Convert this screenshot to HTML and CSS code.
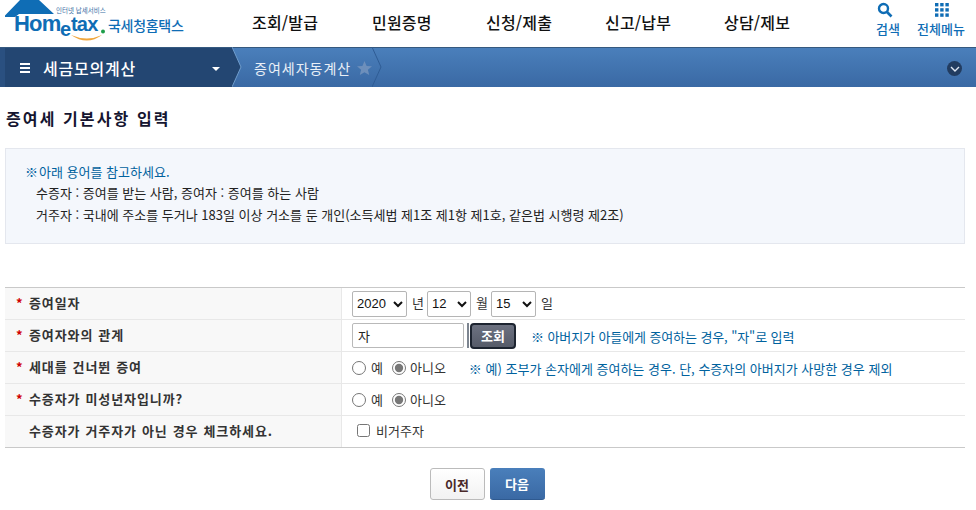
FILE: index.html
```html
<!DOCTYPE html>
<html lang="ko">
<head>
<meta charset="utf-8">
<title>증여세 기본사항 입력</title>
<link rel="stylesheet" href="styles.css">
</head>
<body>
<header class="top">
  <a class="logo">
    <svg class="logo-svg" width="188" height="47" viewBox="0 0 188 47">
      <path d="M5 15.5 L20 0 H39 L54 14 H19 L15 17 H5 Z" fill="#0f6db5"/>
      <text x="56" y="13" class="logo-small">인터넷 납세서비스</text>
      <text x="14" y="31" class="logo-home">Hom</text>
      <text x="60" y="36" class="logo-e">e</text>
      <text x="71" y="31" class="logo-tax">tax</text>
      <circle cx="103" cy="31.5" r="2" fill="#1e9e4a"/>
      <path d="M71 35 Q87 46 102 35 Q87 42 71 35 Z" fill="#f0a63c"/>
      <text x="108" y="31" class="logo-kr">국세청홈택스</text>
    </svg>
  </a>
  <nav class="gnb">
    <a>조회/발급</a><a>민원증명</a><a>신청/제출</a><a>신고/납부</a><a>상담/제보</a>
  </nav>
  <div class="tools">
    <a class="tool tool-search">
      <svg width="16" height="16" viewBox="0 0 16 16"><circle cx="6.5" cy="6.5" r="4.5" fill="none" stroke="#0f6db5" stroke-width="2.4"/><path d="M10 10 L14.5 14.5" stroke="#0f6db5" stroke-width="2.6"/></svg>
      <span>검색</span>
    </a>
    <a class="tool tool-all">
      <svg width="14" height="14" viewBox="0 0 14 14" fill="#0f6db5"><rect x="0" y="0" width="3.4" height="3.4"/><rect x="5.2" y="0" width="3.4" height="3.4"/><rect x="10.4" y="0" width="3.4" height="3.4"/><rect x="0" y="5.2" width="3.4" height="3.4"/><rect x="5.2" y="5.2" width="3.4" height="3.4"/><rect x="10.4" y="5.2" width="3.4" height="3.4"/><rect x="0" y="10.4" width="3.4" height="3.4"/><rect x="5.2" y="10.4" width="3.4" height="3.4"/><rect x="10.4" y="10.4" width="3.4" height="3.4"/></svg>
      <span>전체메뉴</span>
    </a>
  </div>
</header>

<div class="crumb">
  <div class="crumb-main">
    <span class="burger"><i></i><i></i><i></i></span>
    <strong>세금모의계산</strong>
    <span class="caret"></span>
    <svg class="chev" width="11" height="40" viewBox="0 0 11 40"><path d="M0 0 L9 20 L0 40 Z" fill="#234672"/><path d="M0 0 L9 20 L0 40" fill="none" stroke="#6f9ccc" stroke-width="1"/></svg>
  </div>
  <div class="crumb-sub">
    <span>증여세자동계산</span>
    <svg class="star" width="15" height="14" viewBox="0 0 15 14"><path d="M7.5 0 L9.6 4.9 L15 5.3 L10.9 8.8 L12.2 14 L7.5 11.2 L2.8 14 L4.1 8.8 L0 5.3 L5.4 4.9 Z" fill="#6d8fbb"/></svg>
    <svg class="chev2" width="10" height="40" viewBox="0 0 10 40"><path d="M0 0 L9 20 L0 40" fill="none" stroke="#2f5c94" stroke-width="1"/></svg>
  </div>
  <span class="more"><svg width="10" height="6" viewBox="0 0 10 6"><path d="M1 1 L5 5 L9 1" fill="none" stroke="#dfe7f2" stroke-width="1.4"/></svg></span>
</div>

<main class="content">
  <h2 class="title">증여세 기본사항 입력</h2>

  <section class="notice">
    <p class="notice-head"><span class="mark">※</span>아래 용어를 참고하세요.</p>
    <p class="notice-line">수증자 : 증여를 받는 사람, 증여자 : 증여를 하는 사람</p>
    <p class="notice-line">거주자 : 국내에 주소를 두거나 183일 이상 거소를 둔 개인(소득세법 제1조 제1항 제1호, 같은법 시행령 제2조)</p>
  </section>

  <div class="form">
    <div class="row">
      <div class="label"><b class="req">*</b>증여일자</div>
      <div class="field">
        <select class="sel sel-year"><option>2020</option></select><span class="unit">년</span>
        <select class="sel"><option>12</option></select><span class="unit">월</span>
        <select class="sel"><option>15</option></select><span class="unit">일</span>
      </div>
    </div>
    <div class="row">
      <div class="label"><b class="req">*</b>증여자와의 관계</div>
      <div class="field">
        <input class="text" type="text" value="자"><span class="divider"></span><button class="lookup">조회</button>
        <span class="hint hint-a">※ 아버지가 아들에게 증여하는 경우, "자"로 입력</span>
      </div>
    </div>
    <div class="row">
      <div class="label"><b class="req">*</b>세대를 건너뛴 증여</div>
      <div class="field">
        <label class="opt"><input type="radio" name="a">예</label>
        <label class="opt"><input type="radio" name="a" checked>아니오</label>
        <span class="hint hint-b">※ 예) 조부가 손자에게 증여하는 경우. 단, 수증자의 아버지가 사망한 경우 제외</span>
      </div>
    </div>
    <div class="row">
      <div class="label"><b class="req">*</b>수증자가 미성년자입니까?</div>
      <div class="field">
        <label class="opt"><input type="radio" name="b">예</label>
        <label class="opt"><input type="radio" name="b" checked>아니오</label>
      </div>
    </div>
    <div class="row">
      <div class="label label-plain">수증자가 거주자가 아닌 경우 체크하세요.</div>
      <div class="field">
        <label class="check"><input type="checkbox">비거주자</label>
      </div>
    </div>
  </div>

  <div class="actions">
    <button class="btn btn-prev">이전</button>
    <button class="btn btn-next">다음</button>
  </div>
</main>
</body>
</html>
```
FILE: styles.css
```css
* { box-sizing: border-box; }
html, body { margin: 0; padding: 0; }
body {
  width: 976px;
  height: 510px;
  overflow: hidden;
  background: #fff;
  color: #222;
  font-family: "Noto Sans CJK KR", "Liberation Sans", sans-serif;
  font-size: 13px;
}
p, h2 { margin: 0; }

.top { display: flex; height: 47px; position: relative; }
.logo { display: block; width: 252px; flex: none; }
.logo-svg { display: block; }
.logo-small { font-size: 6.5px; fill: #3a6ea5; font-family: "Noto Sans CJK KR", sans-serif; }
.logo-home { font-family: "Liberation Sans", sans-serif; font-weight: 700; font-size: 22px; fill: #0f6db5; letter-spacing: -0.8px; }
.logo-tax { font-family: "Liberation Sans", sans-serif; font-weight: 700; font-size: 20px; fill: #0f6db5; letter-spacing: -0.8px; }
.logo-e { font-family: "Liberation Sans", sans-serif; font-weight: 700; font-size: 20px; fill: #0f6db5; }
.logo-kr { font-size: 14px; font-weight: 500; fill: #0f6db5; letter-spacing: -0.3px; }

.gnb { display: flex; flex: none; width: 560px; padding-top: 10px; }
.gnb a { flex: none; font-size: 16px; font-weight: 500; color: #111; line-height: 24px; white-space: nowrap; width: 119px; letter-spacing: 0.2px; }
.gnb a:first-child { width: 120px; }
.gnb a:nth-child(2) { width: 114px; }
.gnb a:last-child { width: 88px; }

.tools { display: flex; position: relative; flex: 1; padding-left: 64px; padding-top: 2px; }
.tool { display: flex; flex-direction: column; align-items: center; font-size: 13px; font-weight: 500; color: #0f6db5; }
.tool span { line-height: 17px; margin-top: 2px; white-space: nowrap; }
.tool-search { width: 25px; align-items: flex-start; }
.tool-search svg { margin-left: 1px; }
.tool-all { margin-left: 15px; width: 50px; }
.tool-all svg { margin: 1px 0 1px 2px; }

.crumb {
  display: flex;
  height: 40px;
  background: linear-gradient(#4a7fbb, #3a69a4);
  color: #fff;
  position: relative;
  border-top: 1px solid #35597f;
}
.crumb-main {
  display: flex;
  align-items: center;
  width: 233px;
  flex: none;
  background: #234672;
  border-left: 5px solid #2a5080;
  padding-left: 15px;
  position: relative;
}
.burger { display: flex; flex-direction: column; gap: 2px; width: 10px; flex: none; }
.burger i { display: block; height: 2px; background: #fff; }
.crumb-main strong { font-size: 16px; font-weight: 500; margin-left: 13px; letter-spacing: 0.8px; }
.caret {
  position: absolute; left: 207px; top: 19px;
  border-left: 4px solid transparent; border-right: 4px solid transparent; border-top: 4px solid #fff;
}
.chev { position: absolute; left: 227px; top: -1px; }
.crumb-sub { display: flex; align-items: center; padding-left: 21px; font-size: 14px; color: #e9eff7; position: relative; width: 150px; }
.star { margin-left: 6px; flex: none; }
.chev2 { position: absolute; left: 139px; top: -1px; }
.crumb-sub span { white-space: nowrap; letter-spacing: 1px; }
.more {
  position: absolute; right: 14px; top: 13px;
  width: 15px; height: 15px; border-radius: 50%;
  background: #223c60;
  display: flex; align-items: center; justify-content: center;
}

.content { padding: 0 11px 0 5px; }
.title { font-size: 16px; font-weight: 700; color: #151530; line-height: 22px; padding-top: 20px; letter-spacing: 2.1px; margin-left: 1px; }
.notice {
  margin-top: 19px;
  height: 96px;
  background: #f4f7fc;
  border: 1px solid #e4e7ee;
  padding: 12px 0 0 19px;
}
.notice p { line-height: 21.4px; white-space: nowrap; }
.notice-head { color: #00629e; }
.mark { margin-right: 1px; }
.notice-line { padding-left: 11px; color: #222; }

.form {
  margin-top: 43px;
  border-top: 1px solid #c9c9c9;
  border-bottom: 1px solid #c9c9c9;
}
.row { display: flex; height: 32px; border-bottom: 1px solid #e8e8e8; }
.row:last-child { border-bottom: 0; height: 31px; }
.label {
  width: 337px; flex: none;
  background: #f8f8f8;
  border-right: 1px solid #e8e8e8;
  display: flex; align-items: center;
  padding: 0 0 3px 11px;
  font-weight: 700;
  color: #333;
  letter-spacing: 0.9px;
  word-spacing: 0.5px;
  white-space: nowrap;
}
.label-plain { padding-left: 24px; }
.req { color: #d00000; width: 13px; flex: none; font-weight: 700; }
.field { display: flex; align-items: center; padding-left: 10px; flex: 1; white-space: nowrap; position: relative; }

.sel {
  height: 26px; width: 44px;
  font-family: "Liberation Sans", sans-serif; font-size: 13px;
  border: 1px solid #b5b5b5; border-radius: 2px;
  background-color: #fff; color: #111;
}
.sel-year { width: 55px; }
.sel:last-of-type { width: 45px; }
.unit { margin: 0 3px 2px 5px; color: #333; }
.text {
  width: 112px; height: 25px;
  border: 1px solid #b9b9b9; border-radius: 2px;
  padding: 0 5px; font: 13px "Noto Sans CJK KR", sans-serif; color: #222;
}
.divider { width: 2px; height: 25px; background: #7d8590; margin-left: 3px; flex: none; }
.lookup {
  width: 46px; height: 26px; margin-left: 1px;
  border: 2px solid #1d2430; border-radius: 4px;
  background: linear-gradient(#6c7180, #565b69);
  color: #fff; font: 700 13px "Noto Sans CJK KR", sans-serif;
  padding: 0;
}
.hint { color: #00629e; }
.hint-a { margin-left: 15px; letter-spacing: -0.1px; padding-top: 2px; }
.hint-b { margin-left: 14px; padding-top: 2px; }
.opt { display: inline-flex; align-items: center; margin-right: 9px; color: #333; }
.opt input { width: 14px; height: 14px; margin: 1px 4px 0 0; accent-color: #777; }
.opt:first-of-type input { margin-right: 5px; }
.check { display: inline-flex; align-items: center; margin-left: 5px; padding-bottom: 2px; color: #333; }
.check input { width: 13px; height: 13px; margin: 0 6px 0 0; }

.actions { display: flex; justify-content: center; gap: 5px; margin-top: 20px; padding-left: 4px; }
.btn { width: 55px; height: 32px; border-radius: 3px; font: 700 13px "Noto Sans CJK KR", sans-serif; padding: 0; }
.btn-prev { background: linear-gradient(#fff, #f2f2f2); border: 1px solid #bbb; color: #4a2a2a; }
.btn-next { background: linear-gradient(#4a7fbb, #3a69a4); border: 0; border-bottom: 1px solid #2f5a90; color: #fff; }
```
